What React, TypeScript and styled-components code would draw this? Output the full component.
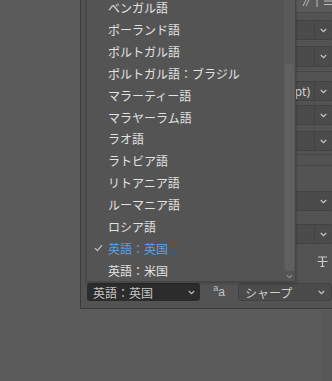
import React from "react";
import styled, { createGlobalStyle } from "styled-components";

const Global = createGlobalStyle`
  html, body { margin: 0; padding: 0; background: #5b5b5b; overflow: hidden; }
  body { width: 332px; height: 381px; font-family: "Noto Sans CJK JP", "Noto Sans", sans-serif; }
`;

const Page = styled.div`
  width: 332px;
  height: 381px;
  position: relative;
  overflow: hidden;
  background: #5b5b5b;
`;

const Panel = styled.div`
  position: relative;
  margin-left: 80px;
  width: 270px;
  height: 308px;
  background: #535353;
  border-left: 1px solid #3b3b3b;
  border-bottom: 1px solid #3b3b3b;
  display: flex;
  flex-direction: column;
`;

const OuterScroll = styled.div`
  position: absolute;
  right: 0;
  top: 310px;
  width: 11px;
  height: 71px;
  background: #585858;
  border-top-left-radius: 5px;
`;

const Controls = styled.div`
  flex: 1;
  display: flex;
  flex-direction: column;
  padding-left: 110px;
`;

const HeaderStrip = styled.div`
  height: 12px;
  background: #5a5a5a;
  display: flex;
  align-items: flex-start;
  justify-content: flex-end;
  padding-right: 17px;
  gap: 6px;
  border-bottom: 1px solid #4a4a4a;
`;

const Field = styled.div<{ $mt: number; $h?: number }>`
  margin-top: ${(p) => p.$mt}px;
  height: ${(p) => p.$h ?? 20}px;
  margin-right: 18px;
  display: flex;
  background: #4b4b4b;
  border: 1px solid #424242;
  box-sizing: border-box;
  border-radius: 2px;
`;

const FieldText = styled.div`
  flex: 1;
  display: flex;
  align-items: center;
  justify-content: flex-end;
  padding-right: 4px;
  font-size: 12px;
  color: #cfcfcf;
  font-family: "Noto Sans", sans-serif;
`;

const ChevCell = styled.div<{ $divided?: boolean }>`
  width: 17px;
  display: flex;
  align-items: center;
  justify-content: center;
  border-left: ${(p) => (p.$divided ? "1px solid #424242" : "none")};
`;

const Rule = styled.div<{ $mt: number }>`
  margin-top: ${(p) => p.$mt}px;
  height: 1px;
  background: #474747;
`;

const IconRow = styled.div`
  margin-top: 12px;
  height: 14px;
  display: flex;
  justify-content: flex-end;
  padding-right: 23px;
`;

const BottomRow = styled.div`
  height: 18px;
  margin-bottom: 7px;
  padding-left: 6px;
  display: flex;
  align-items: stretch;
`;

const LangSelect = styled.div`
  width: 113px;
  box-sizing: border-box;
  background: #2c2c2c;
  border-radius: 3px;
  display: flex;
  align-items: center;
  padding-left: 6px;
  padding-right: 5px;
  font-size: 12px;
  color: #c6c6c6;
  justify-content: space-between;
`;

const AaIcon = styled.div`
  width: 38px;
  display: flex;
  align-items: flex-end;
  justify-content: center;
  color: #c4c4c4;
  font-family: "Liberation Sans", sans-serif;
  line-height: 1;
  padding-bottom: 3px;
  box-sizing: border-box;
`;

const SmallA = styled.span`
  font-size: 9px;
  transform: translateY(-5px);
`;

const BigA = styled.span`
  font-size: 12px;
`;

const AASelect = styled.div`
  width: 94px;
  box-sizing: border-box;
  background: #4b4b4b;
  border: 1px solid #424242;
  border-radius: 3px;
  display: flex;
  align-items: center;
  justify-content: space-between;
  padding-left: 6px;
  padding-right: 6px;
  font-size: 12px;
  color: #cfcfcf;
`;

const Menu = styled.div`
  position: absolute;
  left: 5px;
  top: -4px;
  width: 210px;
  height: 286px;
  box-sizing: border-box;
  background: #545454;
  border: 1px solid #464646;
  display: flex;
  box-shadow: 0 1px 3px rgba(0, 0, 0, 0.25);
`;

const List = styled.div`
  flex: 1;
  display: flex;
  flex-direction: column;
`;

const Item = styled.div<{ $selected?: boolean }>`
  height: 22px;
  display: flex;
  align-items: center;
  font-size: 12px;
  color: ${(p) => (p.$selected ? "#55a3ec" : "#e2e2e2")};
  white-space: nowrap;
`;

const CheckCell = styled.div`
  width: 21px;
  display: flex;
  align-items: center;
  justify-content: center;
  padding-left: 1px;
  box-sizing: border-box;
`;

const ScrollTrack = styled.div`
  width: 11px;
  background: #595959;
  display: flex;
  flex-direction: column;
  padding-top: 66px;
  box-sizing: border-box;
`;

const Thumb = styled.div`
  height: 208px;
  margin: 0 1px;
  border-radius: 5px;
  background: #606060;
`;

const ArrowCell = styled.div`
  flex: 1;
  display: flex;
  align-items: center;
  justify-content: center;
  background: #545454;
`;

const Chevron = ({ color = "#c6c6c6", w = 7 }: { color?: string; w?: number }) => (
  <svg width={w} height={5} viewBox="0 0 7 5">
    <path d="M0.8 1 L3.5 3.7 L6.2 1" fill="none" stroke={color} strokeWidth="1.2" />
  </svg>
);

const items = [
  "ベンガル語",
  "ポーランド語",
  "ポルトガル語",
  "ポルトガル語：ブラジル",
  "マラーティー語",
  "マラヤーラム語",
  "ラオ語",
  "ラトビア語",
  "リトアニア語",
  "ルーマニア語",
  "ロシア語",
  "英語：英国",
  "英語：米国",
];

export default function App() {
  return (
    <>
      <Global />
      <Page>
        <Panel>
          <Controls>
            <HeaderStrip>
              <svg width="9" height="6" viewBox="0 0 9 6">
                <path d="M2 6 L5 0 M5 6 L8 0" stroke="#bdbdbd" strokeWidth="1" fill="none" />
              </svg>
              <svg width="2" height="7" viewBox="0 0 2 7">
                <path d="M1 0 V7" stroke="#bdbdbd" strokeWidth="1" />
              </svg>
              <svg width="10" height="6" viewBox="0 0 10 6">
                <path d="M0 1 H10 M0 4.5 H10" stroke="#bdbdbd" strokeWidth="1" />
              </svg>
            </HeaderStrip>
            <Field $mt={7}>
              <FieldText />
              <ChevCell $divided>
                <Chevron />
              </ChevCell>
            </Field>
            <Field $mt={6} $h={21}>
              <FieldText />
              <ChevCell $divided>
                <Chevron />
              </ChevCell>
            </Field>
            <Rule $mt={4} />
            <Field $mt={9}>
              <FieldText>(14.4 pt)</FieldText>
              <ChevCell $divided>
                <Chevron />
              </ChevCell>
            </Field>
            <Field $mt={4}>
              <FieldText />
              <ChevCell $divided>
                <Chevron />
              </ChevCell>
            </Field>
            <Field $mt={6}>
              <FieldText />
              <ChevCell $divided>
                <Chevron />
              </ChevCell>
            </Field>
            <Rule $mt={3} />
            <Rule $mt={10} />
            <Field $mt={25}>
              <FieldText />
              <ChevCell>
                <Chevron />
              </ChevCell>
            </Field>
            <Field $mt={13}>
              <FieldText />
              <ChevCell $divided>
                <Chevron />
              </ChevCell>
            </Field>
            <IconRow>
              <svg width="11" height="11" viewBox="0 0 11 11">
                <path d="M1 1 H10 M5.5 1 V10.5 M0.5 5.5 H10.5 M3.5 10.5 H7.5" stroke="#cccccc" strokeWidth="1.2" fill="none" />
              </svg>
            </IconRow>
          </Controls>
          <BottomRow>
            <LangSelect>
              <span>英語：英国</span>
              <Chevron color="#bdbdbd" />
            </LangSelect>
            <AaIcon>
              <SmallA>a</SmallA>
              <BigA>a</BigA>
            </AaIcon>
            <AASelect>
              <span>シャープ</span>
              <Chevron />
            </AASelect>
          </BottomRow>
          <Menu>
            <List>
              {items.map((t) => {
                const sel = t === "英語：英国";
                return (
                  <Item key={t} $selected={sel}>
                    <CheckCell>
                      {sel && (
                        <svg width="9" height="8" viewBox="0 0 9 8">
                          <path d="M1 4.2 L3.4 6.6 L8 1.2" fill="none" stroke="#bdbdbd" strokeWidth="1.3" />
                        </svg>
                      )}
                    </CheckCell>
                    {t}
                  </Item>
                );
              })}
            </List>
            <ScrollTrack>
              <Thumb />
              <ArrowCell>
                <Chevron color="#8a8a8a" w={7} />
              </ArrowCell>
            </ScrollTrack>
          </Menu>
        </Panel>
        <OuterScroll />
      </Page>
    </>
  );
}
